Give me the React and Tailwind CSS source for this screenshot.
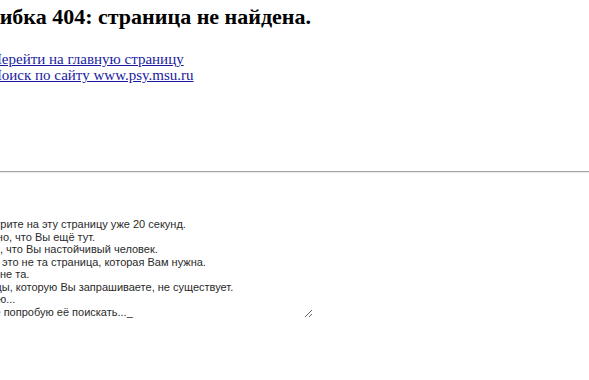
export default function App() {
  const text = [
    "Вы смотрите на эту страницу уже 20 секунд.",
    "Очевидно, что Вы ещё тут.",
    "Кажется, что Вы настойчивый человек.",
    "Однако, это не та страница, которая Вам нужна.",
    "Совсем не та.",
    "Страницы, которую Вы запрашиваете, не существует.",
    "Сожалею...",
    "Давайте попробую её поискать..._",
  ].join("\n");

  return (
    <div className="w-[589px] h-[380px] overflow-hidden bg-white">
      <h1 className="-ml-[36px] pt-[3px] text-[22px] leading-[28px] font-bold text-black whitespace-nowrap [font-family:'Liberation_Serif',serif]">
        Ошибка 404: страница не найдена.
      </h1>

      <div className="-ml-[9px] mt-[20px] flex flex-col text-[15px] leading-[16px] [font-family:'Liberation_Serif',serif]">
        <a href="#" className="w-fit text-[#1a1aa0] underline whitespace-nowrap">
          Перейти на главную страницу
        </a>
        <a href="#" className="w-fit text-[#1a1aa0] underline whitespace-nowrap">
          Поиск по сайту www.psy.msu.ru
        </a>
      </div>

      <hr className="mt-[88px] border-0 border-t border-b border-t-[#a3a3a3] border-b-[#ededed]" />

      <textarea
        readOnly
        value={text}
        className="block -ml-[42px] mt-[45px] w-[355px] h-[100px] p-0 border-0 outline-none resize overflow-hidden text-[11px] leading-[12.5px] text-[#2a2a2a] [font-family:'Liberation_Sans',sans-serif]"
      />
    </div>
  );
}
